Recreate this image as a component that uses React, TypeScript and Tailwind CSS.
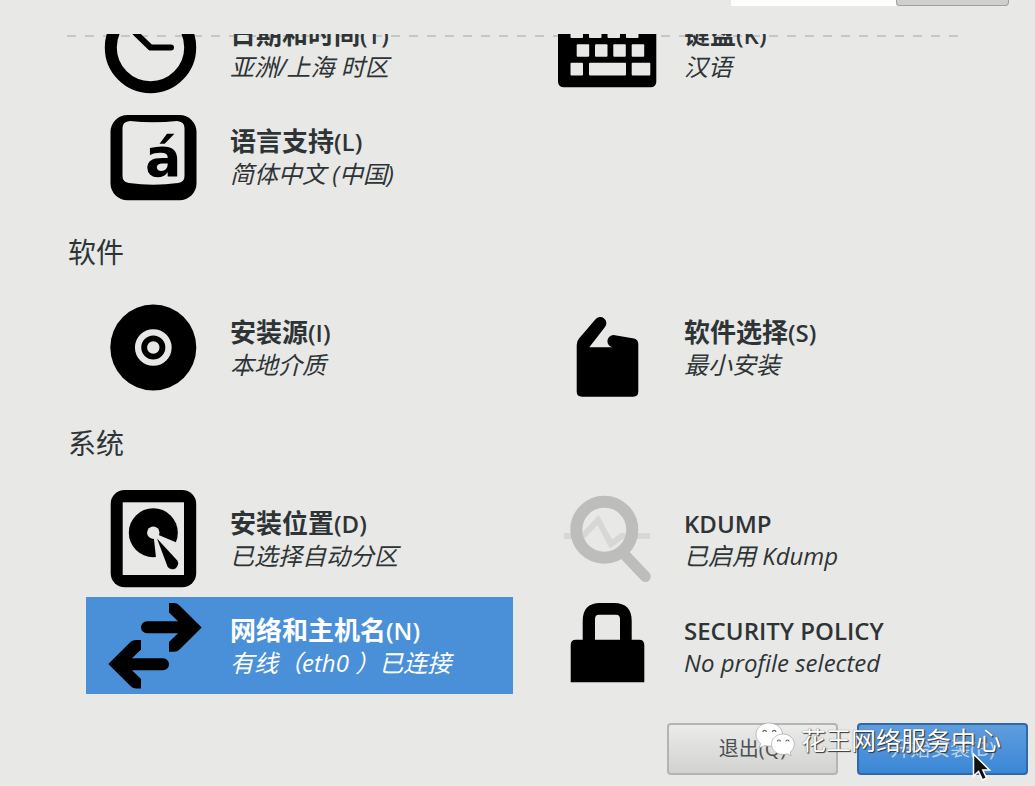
import type { ReactNode } from "react";

type Spoke = {
  title: string;
  hotkey?: string;
  status: string;
  icon: ReactNode;
  selected?: boolean;
};

function Icon({ children }: { children: ReactNode }) {
  return (
    <svg viewBox="0 0 98 97" className="h-[97px] w-[98px] shrink-0 overflow-visible" aria-hidden="true">
      {children}
    </svg>
  );
}

const PAPER = "#e8e8e6";

const clockIcon = (
  <Icon>
    <circle cx="46.5" cy="46.5" r="39.7" fill="none" stroke="#000" strokeWidth="12" />
    <path d="M31 31.5L46.5 46.5H67" fill="none" stroke="#000" strokeWidth="6" strokeLinecap="round" strokeLinejoin="round" />
  </Icon>
);

const keyboardIcon = (
  <Icon>
    <rect y="14" width="98.3" height="72.3" rx="5.5" />
    <g fill={PAPER}>
      <rect x="12.5" y="24.5" width="12.5" height="12.5" rx="1" />
      <rect x="31" y="24.5" width="12.5" height="12.5" rx="1" />
      <rect x="49.5" y="24.5" width="12.5" height="12.5" rx="1" />
      <rect x="68" y="24.5" width="12.5" height="12.5" rx="1" />
      <rect x="18.7" y="43.3" width="12.5" height="12.5" rx="1" />
      <rect x="37" y="43.3" width="12.5" height="12.5" rx="1" />
      <rect x="55.3" y="43.3" width="12.5" height="12.5" rx="1" />
      <rect x="73.7" y="43.3" width="12.5" height="12.5" rx="1" />
      <rect x="12.5" y="61.7" width="12.5" height="12.8" rx="1" />
      <rect x="31" y="61.7" width="37" height="12.8" rx="1" />
      <rect x="73.7" y="61.7" width="18.6" height="12.8" rx="1" />
    </g>
  </Icon>
);

const languageIcon = (
  <Icon>
    <rect x="6.5" y="7" width="86" height="85.3" rx="17" />
    <path d="M26 13Q49 15.5 73 13Q80.5 13.5 80.5 20V68Q80.5 74 74 75Q49 78.5 25 75Q18.5 74 18.5 68V20Q18.5 13.5 26 13Z" fill={PAPER} />
    <text x="41" y="68" fontSize="54" className="font-['DejaVu_Sans',sans-serif] font-bold">
      á
    </text>
  </Icon>
);

const discIcon = (
  <Icon>
    <circle cx="49.3" cy="48.5" r="43" />
    <circle cx="49.3" cy="48.5" r="15.2" fill="none" stroke={PAPER} strokeWidth="6.3" />
    <circle cx="49.3" cy="48.5" r="6.2" fill={PAPER} />
  </Icon>
);

const packageIcon = (
  <Icon>
    <path d="M18.7 46Q18.7 42 21 39.5L37.5 20.3A6 6 0 0 1 47 28L31.3 48.3H54.5A6.2 6.2 0 0 1 55.5 36L76 39.5Q80.3 40.5 80.3 45V92.5Q80.3 97.7 75 97.7H24Q18.7 97.7 18.7 92.5Z" />
  </Icon>
);

const diskIcon = (
  <Icon>
    <rect x="6.7" y="0" width="85.5" height="97.3" rx="14" />
    <rect x="18.7" y="12.3" width="61.3" height="72.7" fill={PAPER} />
    <circle cx="49.3" cy="42.7" r="24.5" />
    <path d="M49.3 42.7L76 54V72H52.5Z" fill={PAPER} />
    <circle cx="49.3" cy="42.7" r="6.2" fill={PAPER} />
    <path d="M53 48.5L73.3 70.5A5.7 5.7 0 0 1 63.5 76.5Z" />
  </Icon>
);

const kdumpIcon = (
  <Icon>
    <path d="M6 46H25L40 30L53 54L64 46H92" fill="none" stroke="#d7d7d5" strokeWidth="6" />
    <g fill="none" stroke="#bdbdbc">
      <circle cx="46.3" cy="39.7" r="28" strokeWidth="12" />
      <path d="M65 63L87.3 86.5" strokeWidth="11" strokeLinecap="round" />
    </g>
  </Icon>
);

const networkArrow = "M65 6H70Q73 6 75 8L97.7 30.5L75 53Q73 54.7 70 54.7H65V45L74 36.3H43A6 6 0 0 1 43 24.3H74L65 15.5Z";

const networkIcon = (
  <Icon>
    <path d={networkArrow} />
    <path d={networkArrow} transform="rotate(180 51 48.8)" />
  </Icon>
);

const lockIcon = (
  <Icon>
    <path d="M12.7 85.3V48Q12.7 42.7 18 42.7H24.7V24Q24.7 6 42 6H56Q73.7 6 73.7 24V42.7H81Q86.3 42.7 86.3 48V85.3ZM37 42.7H62V22Q62 17.7 58 17.7H41Q37 17.7 37 22Z" />
  </Icon>
);

const localization: Spoke[] = [
  { title: "日期和时间", hotkey: "(T)", status: "亚洲/上海 时区", icon: clockIcon },
  { title: "键盘", hotkey: "(K)", status: "汉语", icon: keyboardIcon },
  { title: "语言支持", hotkey: "(L)", status: "简体中文 (中国)", icon: languageIcon },
];

const software: Spoke[] = [
  { title: "安装源", hotkey: "(I)", status: "本地介质", icon: discIcon },
  { title: "软件选择", hotkey: "(S)", status: "最小安装", icon: packageIcon },
];

const system: Spoke[] = [
  { title: "安装位置", hotkey: "(D)", status: "已选择自动分区", icon: diskIcon },
  { title: "", hotkey: "KDUMP", status: "已启用 Kdump", icon: kdumpIcon },
  { title: "网络和主机名", hotkey: "(N)", status: "有线（eth0 ）已连接", icon: networkIcon, selected: true },
  { title: "", hotkey: "SECURITY POLICY", status: "No profile selected", icon: lockIcon },
];

function SpokeGrid({ spokes }: { spokes: Spoke[] }) {
  return (
    <div className="grid grid-cols-2 gap-x-[27px] gap-y-[10px] pr-[68px] pl-[86px]">
      {spokes.map((s) => (
        <button
          key={s.status}
          type="button"
          className={`flex items-center gap-7 px-[18px] text-left whitespace-nowrap ${s.selected ? "bg-[#4a90d9] text-white" : ""}`}
        >
          {s.icon}
          <span className="flex flex-col">
            <span className="text-[26px] leading-[33px] font-bold">
              {s.title}
              <span className="text-2xl leading-[33px] font-semibold">{s.hotkey}</span>
            </span>
            <span className="text-2xl leading-[31px] italic">{s.status}</span>
          </span>
        </button>
      ))}
    </div>
  );
}

function SectionTitle({ children }: { children: ReactNode }) {
  return <h2 className="flex h-[94px] items-center pl-[68px] text-[28px] leading-none">{children}</h2>;
}

function Watermark() {
  return (
    <div className="pointer-events-none absolute right-[34px] bottom-7 flex items-center gap-1.5">
      <svg viewBox="0 0 40 36" className="h-9 w-10" aria-hidden="true">
        <g fill="#fff" stroke="#999" strokeWidth=".6">
          <path d="M14 1C6.5 1 1 6 1 12.5C1 16 2.8 19.2 5.5 21.3L4.5 26L9.5 23.5C11 24 12.5 24.2 14 24.2C21.5 24.2 27.5 19 27.5 12.5S21.5 1 14 1Z" />
          <path d="M28 12C21.5 12 16.5 16.5 16.5 22.2S21.5 32.5 28 32.5C29.5 32.5 31 32.2 32.3 31.8L36 34L35.2 30C37.7 28.2 39.3 25.4 39.3 22.2C39.3 16.5 34.3 12 28 12Z" />
        </g>
        <g fill="none" stroke="#666" strokeWidth="1.2">
          <path d="M8 10A1.7 1.7 0 0 1 11.4 10M17.5 10A1.7 1.7 0 0 1 20.9 10M22.5 19.5A1.5 1.5 0 0 1 25.5 19.5M31 19.5A1.5 1.5 0 0 1 34 19.5" />
        </g>
      </svg>
      <span className="text-[25px] leading-9 whitespace-nowrap text-white [text-shadow:1px_1px_1px_#333,0_0_1px_#555]">花王网络服务中心</span>
    </div>
  );
}

export default function App() {
  return (
    <div className="flex min-h-screen flex-col overflow-hidden bg-[#e8e8e6] font-['Open_Sans','Noto_Sans_CJK_SC',sans-serif] text-[#2e3436]">
      <header className="flex h-[34px] items-start justify-end pr-[26px]">
        <input aria-label="键盘布局" className="h-[6px] w-[165px] bg-white" />
        <button
          type="button"
          aria-label="帮助"
          className="h-[6px] w-[113px] rounded-b-[4px] border border-t-0 border-[#a0a09f] bg-[#cfcfcd]"
        />
      </header>

      <main className="relative flex-1 overflow-hidden">
        <div className="absolute top-px right-[75px] left-[67px] h-0.5 bg-[repeating-linear-gradient(90deg,#c6c6c4_0_9px,transparent_9px_18px)]" />
        <div className="relative -mt-[33px]">
          <SpokeGrid spokes={localization} />
          <SectionTitle>软件</SectionTitle>
          <SpokeGrid spokes={software} />
          <SectionTitle>系统</SectionTitle>
          <SpokeGrid spokes={system} />
        </div>
      </main>

      <footer className="relative flex justify-end gap-[19px] pt-7 pr-[7px] pb-[11px] text-xl">
        <button
          type="button"
          className="h-[52px] w-[171px] rounded-[4px] border-2 border-[#b4b4b2] bg-linear-to-b from-[#ebebea] to-[#d2d2d0] text-[#4c5052]"
        >
          退出(Q)
        </button>
        <button
          type="button"
          className="h-[52px] w-[171px] rounded-[4px] border-2 border-[#2f69a8] bg-linear-to-b from-[#5f9ddd] to-[#3a87d6] text-[#b9d3ee]"
        >
          开始安装(B)
        </button>
        <Watermark />
        <svg viewBox="0 0 20 30" className="pointer-events-none absolute right-[43px] bottom-1 h-[30px] w-5" aria-hidden="true">
          <path d="M1.5 2V24L6.5 19.5L10.5 28L14.5 26L10.8 18H17.5Z" fill="#111" stroke="#fff" strokeWidth="1.5" />
        </svg>
      </footer>
    </div>
  );
}
